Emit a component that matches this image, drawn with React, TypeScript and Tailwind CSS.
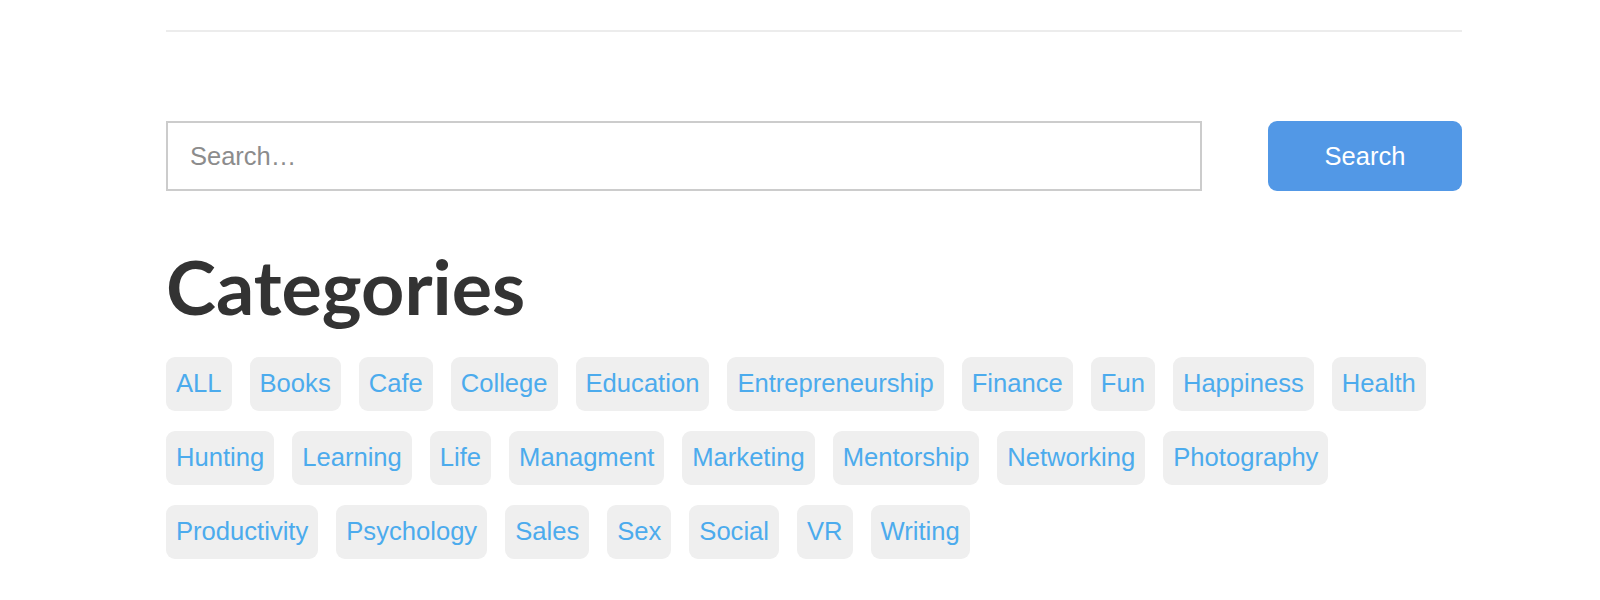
const CATEGORIES = [
  'ALL', 'Books', 'Cafe', 'College', 'Education', 'Entrepreneurship', 'Finance', 'Fun', 'Happiness', 'Health',
  'Hunting', 'Learning', 'Life', 'Managment', 'Marketing', 'Mentorship', 'Networking', 'Photography',
  'Productivity', 'Psychology', 'Sales', 'Sex', 'Social', 'VR', 'Writing',
];

export default function App() {
  return (
    <div className="min-h-[600px] bg-white pt-[30px]">
      <div className="ml-[166px] w-[1296px]">
        <hr className="border-0 border-t-2 border-[#ececec]" />

        <form className="mt-[89px] flex items-center justify-between" onSubmit={(e) => e.preventDefault()}>
          <input
            type="text"
            placeholder="Search…"
            className="h-[70px] w-[1036px] border-2 border-[#cccccc] bg-white px-[22px] text-[25.5px] text-[#333] outline-none placeholder:text-[#8c8c8c]"
            style={{ fontFamily: '"Liberation Sans", Arial, sans-serif' }}
          />
          <button
            type="submit"
            className="h-[70px] w-[194px] rounded-[9px] bg-[#5298e6] text-[25.5px] text-white"
            style={{ fontFamily: '"Liberation Sans", Arial, sans-serif' }}
          >
            Search
          </button>
        </form>

        <h2
          className="mt-[50px] text-[75.5px] leading-[1.2] font-bold text-[#333333]"
          style={{ fontFamily: 'Lato, sans-serif' }}
        >
          Categories
        </h2>

        <div className="mt-[25px] flex flex-wrap gap-x-[18px] gap-y-[20px]">
          {CATEGORIES.map((cat) => (
            <a
              key={cat}
              href="#"
              className="flex h-[54px] items-center rounded-[9px] bg-[#efefef] px-[10px] text-[25.6px] text-[#4cabed]"
              style={{ fontFamily: '"Liberation Sans", Arial, sans-serif' }}
            >
              {cat}
            </a>
          ))}
        </div>
      </div>
    </div>
  );
}
